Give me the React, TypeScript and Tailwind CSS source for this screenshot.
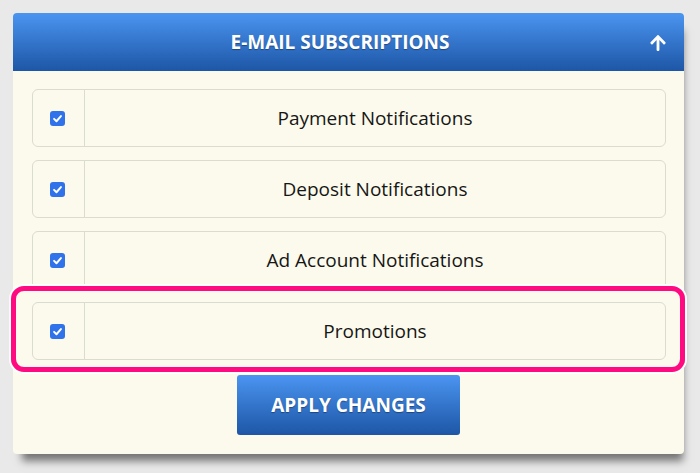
import { FaArrowUp } from "react-icons/fa";

const items = [
  "Payment Notifications",
  "Deposit Notifications",
  "Ad Account Notifications",
  "Promotions",
];

// ─── Check box ────────────────────────────────────────────────────────────────

function Check() {
  return (
    <span className="flex h-[15px] w-[15px] items-center justify-center rounded-[3px] bg-[#2f72ea]">
      <svg viewBox="0 0 16 16" className="h-[11px] w-[11px]">
        <path
          d="M3 8.5 L6.5 12 L13 4.5"
          fill="none"
          stroke="white"
          strokeWidth="2.8"
          strokeLinecap="round"
          strokeLinejoin="round"
        />
      </svg>
    </span>
  );
}

function Row({ label }: { label: string }) {
  return (
    <div className="flex h-[58px] rounded-[6px] border border-[#dcdbd0] bg-[#fcfaec]">
      <div className="flex w-[52px] items-center justify-center border-r border-[#dcdbd0] pr-[2px]">
        <Check />
      </div>
      <div className="flex flex-1 items-center justify-center text-[19px] text-[#161616]">
        {label}
      </div>
    </div>
  );
}

// ─── Page ─────────────────────────────────────────────────────────────────────

export default function App() {
  return (
    <div
      className="min-h-[473px] w-[700px] bg-[#e9e9e9] pl-[13px] pt-[13px]"
      style={{ fontFamily: '"Open Sans", "Liberation Sans", sans-serif' }}
    >
      <div className="w-[671px] rounded-[4px] bg-[#fcfaec] shadow-[4px_12px_8px_-5px_rgba(0,0,0,0.5)]">
        <div className="relative flex h-[58px] items-center justify-center rounded-t-[4px] bg-gradient-to-b from-[#4b95f1] to-[#1d56a6] pr-[17px]">
          <span className="text-[19px] font-bold text-white [text-shadow:0_1px_1px_rgba(0,0,0,0.35)]">
            E-MAIL SUBSCRIPTIONS
          </span>
          <FaArrowUp className="absolute right-[17px] top-[21px] text-white" size={18} />
        </div>

        <div className="flex flex-col gap-[13px] px-[18px] pl-[19px] pt-[18px]">
          {items.map((label, i) =>
            i === items.length - 1 ? (
              <div key={label} className="relative">
                <div className="pointer-events-none absolute -bottom-[12px] -left-[21px] -right-[19px] -top-[16px] rounded-[13px] border-[5px] border-[#ff0a80] shadow-[0_0_0_2px_#ffffff]" />
                <Row label={label} />
              </div>
            ) : (
              <Row key={label} label={label} />
            ),
          )}
        </div>

        <div className="flex justify-center pb-[19px] pt-[15px]">
          <button className="h-[60px] w-[223px] rounded-[3px] bg-gradient-to-b from-[#4b95f1] to-[#1d56a6] text-[19px] font-bold text-white [text-shadow:0_1px_1px_rgba(0,0,0,0.35)]">
            APPLY CHANGES
          </button>
        </div>
      </div>
    </div>
  );
}
